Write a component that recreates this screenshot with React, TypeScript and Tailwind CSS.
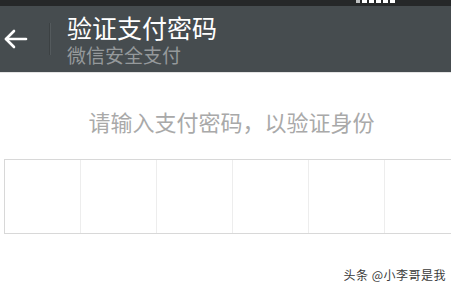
export default function App() {
  const cells = [0, 1, 2, 3, 4, 5];

  return (
    <div
      className="w-[451px] h-[289px] bg-white overflow-hidden relative"
      style={{ fontFamily: '"Noto Sans CJK SC", "Liberation Sans", sans-serif' }}
    >
      {/* status bar, cut off */}
      <div className="h-[6px] bg-[#262829] flex justify-end pr-[56px]">
        <div className="flex gap-[2px] h-[3px]">
          <div className="w-[4px] bg-[#bfc1c2]" />
          <div className="w-[5px] bg-white" />
          <div className="w-[5px] bg-white" />
          <div className="w-[5px] bg-white" />
          <div className="w-[5px] bg-white" />
          <div className="w-[5px] bg-white" />
        </div>
      </div>

      {/* header */}
      <div className="h-[67px] bg-[#464c4f] flex items-center border-b border-[#e4e4e4]">
        <div className="w-[49px] h-full flex items-center pl-[4px]">
          <svg width="24" height="20" viewBox="0 0 24 20" fill="none" stroke="white" strokeWidth="2.6" strokeLinecap="round" strokeLinejoin="round">
            <path d="M22 10H2" />
            <path d="M10 2L2 10L10 18" />
          </svg>
        </div>
        <div className="w-[2px] h-[32px] bg-[#3c4143] border-r border-[#545a5d]" />
        <div className="pl-[16px] flex flex-col gap-[1px]">
          <div className="text-[25px] leading-[29px] text-white">验证支付密码</div>
          <div className="text-[19px] leading-[23px] text-[#95999b]">微信安全支付</div>
        </div>
      </div>

      {/* prompt */}
      <div className="pt-[33px] pl-[12px] text-center text-[22px] leading-[30px] text-[#a9a9a9]">
        请输入支付密码，以验证身份
      </div>

      {/* password boxes */}
      <div className="mt-[23px] ml-[4px] w-[480px] h-[75px] flex border border-[#d8d8d8]">
        {cells.map((c) => (
          <div
            key={c}
            className={`w-[76px] shrink-0 h-full ${c < 5 ? "border-r border-[#ededed]" : ""}`}
          />
        ))}
      </div>

      {/* watermark */}
      <div className="absolute right-[5px] bottom-[6px] text-[12px] leading-[16px] text-[#3a3a3a] tracking-[0.5px]">
        头条 @小李哥是我
      </div>
    </div>
  );
}
